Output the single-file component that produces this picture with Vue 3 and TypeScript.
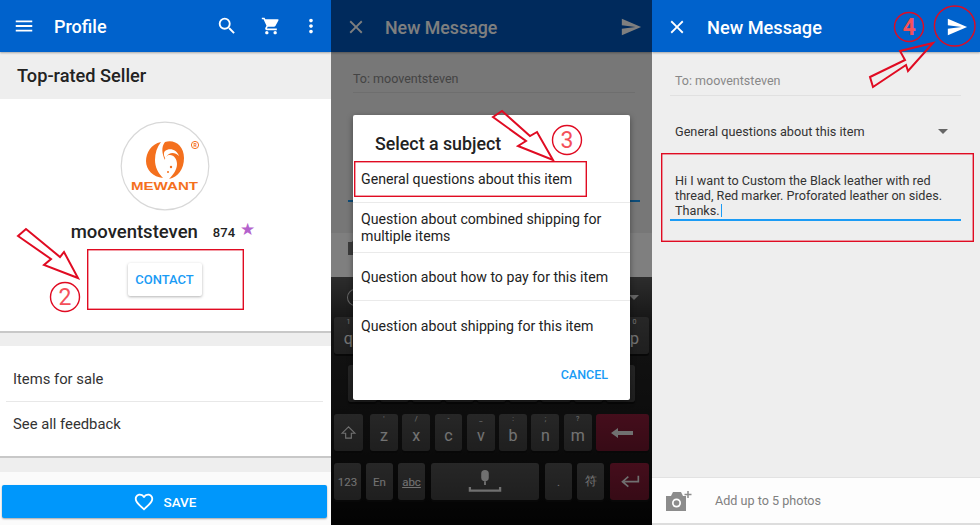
<template>
  <div class="page">
    <!-- 1: seller profile -->
    <section class="panel profile">
      <header class="bar">
        <svg class="ico" viewBox="0 0 24 24"><path d="M3 18h18v-2H3v2zm0-5h18v-2H3v2zm0-7v2h18V6H3z" /></svg>
        <span class="bar-title title-profile">Profile</span>
        <span class="spacer"></span>
        <svg class="ico search" viewBox="0 0 24 24"><path d="M15.5 14h-.79l-.28-.27A6.47 6.47 0 0 0 16 9.5 6.5 6.5 0 1 0 9.5 16c1.61 0 3.09-.59 4.23-1.57l.27.28v.79l5 4.99L20.49 19l-4.99-5zm-6 0C7.01 14 5 11.99 5 9.5S7.01 5 9.500 5 14 7.01 14 9.5 11.99 14 9.5 14z" /></svg>
        <svg class="ico cart" viewBox="0 0 24 24"><path d="M7 18c-1.1 0-1.99.9-1.99 2S5.9 22 7 22s2-.9 2-2-.9-2-2-2zM1 2v2h2l3.6 7.59-1.35 2.45c-.16.28-.25.61-.25.96 0 1.1.9 2 2 2h12v-2H7.42c-.14 0-.25-.11-.25-.25l.03-.12.9-1.63h7.45c.75 0 1.41-.41 1.75-1.03l3.58-6.49A1 1 0 0 0 20 4H5.21l-.94-2H1zm16 16c-1.1 0-1.99.9-1.99 2s.89 2 1.99 2 2-.9 2-2-.9-2-2-2z" /></svg>
        <svg class="ico more" viewBox="0 0 24 24"><path d="M12 8c1.1 0 2-.9 2-2s-.9-2-2-2-2 .9-2 2 .9 2 2 2zm0 2c-1.1 0-2 .9-2 2s.9 2 2 2 2-.9 2-2-.9-2-2-2zm0 6c-1.1 0-2 .9-2 2s.9 2 2 2 2-.9 2-2-.9-2-2-2z" /></svg>
      </header>
      <div class="band">Top-rated Seller</div>
      <div class="card">
        <svg class="avatar" viewBox="0 0 90 90">
          <circle cx="45" cy="45" r="43.8" fill="#fff" stroke="#d8d8d8" stroke-width="1.2" />
          <path d="M41 21C31 23 26 32 26 40c0 9 7 16 17 17-5-5-8-11-8-18 0-7 2-13 6-18z" fill="#f4701e" />
          <path d="M45 21c10-3 19 4 19 16 0 11-6 19-15 21 4-4 8-9 8-15 0-5-3-9-7-9-3 0-5 2-5 5-3-6-4-13 0-18z" fill="#f4701e" />
          <path d="M45 30c5-4 12-1 14 5-3-3-7-4-10-2-2 1-3 3-3 5-2-2-3-6-1-8z" fill="#fff" />
          <circle cx="51" cy="46" r="1.200" fill="#f4701e" />
          <circle cx="48" cy="51" r="1" fill="#f4701e" />
          <circle cx="75" cy="24" r="3.600" fill="none" stroke="#f4701e" stroke-width="1" />
          <text x="75" y="26" class="reg">R</text>
          <text x="11" y="69" class="brand" textLength="67" lengthAdjust="spacingAndGlyphs">MEWANT</text>
        </svg>
        <div class="seller">
          <span class="seller-name">mooventsteven</span>
          <span class="seller-score">874</span>
          <span class="seller-star">★</span>
        </div>
        <button class="contact">CONTACT</button>
      </div>
      <div class="links">
        <div class="link">Items for sale</div>
        <div class="link-sep"></div>
        <div class="link">See all feedback</div>
      </div>
      <div class="save-wrap">
        <button class="save">
          <svg class="heart" viewBox="0 0 24 24"><path d="M16.5 3c-1.74 0-3.41.81-4.5 2.09C10.91 3.81 9.24 3 7.5 3 4.42 3 2 5.42 2 8.5c0 3.78 3.4 6.86 8.55 11.54L12 21.35l1.45-1.32C18.6 15.36 22 12.28 22 8.5 22 5.42 19.58 3 16.5 3zm-4.4 15.55l-.1.1-.1-.1C7.14 14.24 4 11.39 4 8.5 4 6.5 5.5 5 7.5 5c1.54 0 3.04.99 3.57 2.36h1.87C13.46 5.99 14.96 5 16.5 5c2 0 3.5 1.5 3.5 3.5 0 2.89-3.14 5.74-7.9 10.05z" /></svg>
          SAVE
        </button>
      </div>
    </section>

    <!-- 2: subject dialog over the compose screen -->
    <section class="panel subject">
      <header class="bar msg-bar">
        <svg class="ico" viewBox="0 0 24 24"><path d="M19 6.41 17.59 5 12 10.59 6.41 5 5 6.41 10.59 12 5 17.59 6.41 19 12 13.41 17.59 19 19 17.59 13.41 12z" /></svg>
        <span class="bar-title title-msg">New Message</span>
        <span class="spacer"></span>
        <svg class="ico send" viewBox="0 0 24 24"><path d="M2.01 21 23 12 2.01 3 2 10l15 2-15 2z" /></svg>
      </header>
      <div class="compose-behind">
        <div class="to">To: mooventsteven</div>
        <div class="behind-line"></div>
        <div class="behind-blue"></div>
      </div>
      <div class="photos-behind">
        <svg class="cam-behind" viewBox="0 0 24 24"><path d="M3 7h4l2-3h6l2 3h4v13H3z" fill="#777" /></svg>
      </div>
      <div class="keyboard">
        <div class="kb-tools">
          <span class="panda"></span>
          <span class="spacer"></span>
          <span class="kb-caret"></span>
        </div>
        <div class="kb-row row-top">
          <!-- only q and p stick out from under the dialog -->
          <span v-for="k in topRow" :key="k.label" class="key stacked">
            <template v-if="k.label === 'q' || k.label === 'p'">
              <small>{{ k.hint }}</small>
              <b>{{ k.label }}</b>
            </template>
          </span>
        </div>
        <div class="kb-row row-mid">
          <span v-for="k in topRow.slice(0, 9)" :key="k.label" class="key blank"></span>
        </div>
        <div class="kb-row row-low">
          <span class="key shift">
            <svg viewBox="0 0 24 24"><path d="M12 4 3 13h5v7h8v-7h5z" fill="none" stroke="#e0e0e0" stroke-width="1.6" /></svg>
          </span>
          <span v-for="k in lowRow" :key="k.label" class="key stacked letter">
            <small>{{ k.hint }}</small>
            <b>{{ k.label }}</b>
          </span>
          <span class="key red back">
            <svg viewBox="0 0 24 12"><path d="M1 6 8 1v3h15v4H8v3z" fill="#e0e0e0" /></svg>
          </span>
        </div>
        <div class="kb-row row-bottom">
          <span class="key fn">123</span>
          <span class="key fn">En</span>
          <span class="key fn under">abc</span>
          <span class="key space">
            <svg viewBox="0 0 36 26"><rect x="14" y="1" width="8" height="12" rx="4" fill="#e0e0e0" /><path d="M18 13v4" stroke="#e0e0e0" stroke-width="2" /><path d="M2 19v4h32v-4" fill="none" stroke="#e0e0e0" stroke-width="2.4" /></svg>
          </span>
          <span class="key fn">.</span>
          <span class="key fn">符</span>
          <span class="key red enter">
            <svg viewBox="0 0 24 16"><path d="M22 1v7H5M10 2 3 8l7 6" fill="none" stroke="#e0e0e0" stroke-width="2" /></svg>
          </span>
        </div>
      </div>
      <div class="scrim"></div>
      <div class="dialog">
        <div class="dialog-title">Select a subject</div>
        <div class="option first">General questions about this item</div>
        <div class="option two">Question about combined shipping for multiple items</div>
        <div class="option third">Question about how to pay for this item</div>
        <div class="option last">Question about shipping for this item</div>
        <div class="cancel">CANCEL</div>
      </div>
    </section>

    <!-- 3: filled-in compose screen -->
    <section class="panel compose">
      <header class="bar msg-bar">
        <svg class="ico" viewBox="0 0 24 24"><path d="M19 6.41 17.59 5 12 10.59 6.41 5 5 6.41 10.59 12 5 17.59 6.41 19 12 13.41 17.59 19 19 17.59 13.41 12z" /></svg>
        <span class="bar-title title-msg">New Message</span>
        <span class="spacer"></span>
        <svg class="ico send" viewBox="0 0 24 24"><path d="M2.01 21 23 12 2.01 3 2 10l15 2-15 2z" /></svg>
      </header>
      <div class="form">
        <div class="to">To: mooventsteven</div>
        <div class="form-line"></div>
        <div class="subject-row">
          <span>General questions about this item</span>
          <span class="caret"></span>
        </div>
        <div class="message">Hi I want to Custom the Black leather with red thread, Red marker. Proforated leather on sides. Thanks.<i class="cursor"></i></div>
        <div class="message-line"></div>
      </div>
      <footer class="photos">
        <svg class="cam" viewBox="0 0 27 20"><path d="M1 5h5l2-4h8l2 4h3v15H1z" fill="#8c8c8c" /><circle cx="11.500" cy="12" r="4.500" fill="#fff" /><circle cx="11.500" cy="12" r="2.800" fill="#8c8c8c" /><path d="M23 0v7M19.500 3.500h7" stroke="#8c8c8c" stroke-width="1.500" /></svg>
        <span>Add up to 5 photos</span>
      </footer>
    </section>

    <!-- red annotations drawn over the screenshots -->
    <svg class="marks" viewBox="0 0 980 525">
      <polygon points="18,236 26,229 60,257 64,252 78,278 44,265 51,259" />
      <polygon points="493,117 502,111 530,136 537,132 553,160 518,146 526,141" />
      <polygon points="870,77 905,60 900,51 933,43 908,71 906,65 873,87" />
      <ellipse cx="954.700" cy="26" rx="20.300" ry="20" />
      <rect x="87.700" y="249.700" width="155.600" height="59.600" />
      <rect x="354.700" y="161.700" width="231.600" height="34.600" />
      <rect x="661.700" y="153.700" width="311.600" height="87.600" />
      <circle cx="65" cy="297" r="14.500" />
      <circle cx="567" cy="140" r="14.500" />
      <circle cx="909" cy="27" r="14.500" />
    </svg>
    <span class="num num-2">2</span>
    <span class="num num-3">3</span>
    <span class="num num-4">4</span>
  </div>
</template>

<script setup lang="ts">
interface Key {
  label: string;
  hint: string;
}

const topRow: Key[] = [
  { label: 'q', hint: '1' },
  { label: 'w', hint: '2' },
  { label: 'e', hint: '3' },
  { label: 'r', hint: '4' },
  { label: 't', hint: '5' },
  { label: 'y', hint: '6' },
  { label: 'u', hint: '7' },
  { label: 'i', hint: '8' },
  { label: 'o', hint: '9' },
  { label: 'p', hint: '0' },
];

const lowRow: Key[] = [
  { label: 'z', hint: '\'' },
  { label: 'x', hint: '/' },
  { label: 'c', hint: '-' },
  { label: 'v', hint: '_' },
  { label: 'b', hint: ':' },
  { label: 'n', hint: ';' },
  { label: 'm', hint: '?' },
];
</script>

<style>
html,
body {
  margin: 0;
  background: #fff;
}
</style>

<style scoped>
.page {
  position: relative;
  display: grid;
  grid-template-columns: 331px 321px 328px;
  width: 980px;
  height: 525px;
  overflow: hidden;
  font-family: Roboto, "Liberation Sans", sans-serif;
}

.panel {
  position: relative;
  display: flex;
  flex-direction: column;
  height: 525px;
  overflow: hidden;
}

.bar {
  display: flex;
  align-items: center;
  flex: none;
  height: 52px;
  padding: 0 16px 0 13px;
  box-sizing: border-box;
  background: #0062cc;
  box-shadow: 0 1px 2px rgba(0, 0, 0, 0.3);
  color: #fff;
  z-index: 1;
}

.msg-bar {
  padding: 2px 10px 0 14px;
}

.ico {
  flex: none;
  width: 22px;
  height: 22px;
  fill: #fff;
}

.spacer {
  flex: 1;
}

.bar-title {
  font-size: 18px;
  font-weight: 500;
}

.title-profile {
  margin-left: 19px;
}

.title-msg {
  margin-left: 18px;
  font-size: 17.800px;
}

.search {
  margin-right: 23px;
}

.cart {
  width: 20px;
  margin-right: 19px;
}

.more {
  margin-right: -7px;
}

/* first panel */
.profile {
  background: #eee;
}

.band {
  flex: none;
  height: 47px;
  padding-left: 17px;
  line-height: 47px;
  color: #222;
  font-size: 18.200px;
  font-weight: 500;
}

.card {
  display: flex;
  flex-direction: column;
  align-items: center;
  flex: none;
  height: 234px;
  padding: 22px 2px 0 0;
  box-sizing: border-box;
  border-bottom: 2px solid #c8c8c8;
  background: #fff;
}

.avatar {
  width: 90px;
  height: 90px;
}

.reg {
  font-size: 5px;
  font-weight: 700;
  fill: #f4701e;
  text-anchor: middle;
}

.brand {
  font-family: "Liberation Sans", sans-serif;
  font-size: 10.500px;
  font-weight: 700;
  fill: #f4701e;
}

.seller {
  display: flex;
  align-items: center;
  height: 28px;
  margin: 7px 3px 0 0;
  color: #222;
}

.seller-name {
  font-size: 18.500px;
  font-weight: 500;
}

.seller-score {
  margin-left: 15px;
  font-size: 13px;
  font-weight: 500;
}

.seller-star {
  margin: -6px 0 0 5px;
  color: #b462cc;
  font-size: 17px;
  font-family: "DejaVu Sans", sans-serif;
}

.contact {
  width: 74px;
  height: 33px;
  margin-top: 17px;
  border: 0;
  border-radius: 2px;
  background: #fff;
  box-shadow: 0 1px 3px rgba(0, 0, 0, 0.3);
  color: #1a9bf5;
  font: 500 13px Roboto, sans-serif;
}

.links {
  flex: none;
  height: 112px;
  margin-top: 13px;
  box-sizing: border-box;
  border-bottom: 2px solid #c8c8c8;
  background: #fff;
}

.link {
  height: 54.500px;
  padding-left: 13px;
  line-height: 66px;
  color: #333;
  font-size: 14.800px;
}

.link + .link-sep + .link {
  line-height: 44px;
}

.link-sep {
  height: 1px;
  margin: 0 8px 0 6px;
  background: #e8e8e8;
}

.save-wrap {
  flex: 1;
  margin-top: 14px;
  padding: 13px 4px 0 2px;
  background: #fbfbfb;
}

.save {
  display: flex;
  align-items: center;
  justify-content: center;
  gap: 9px;
  width: 100%;
  height: 33px;
  border: 0;
  border-radius: 2px;
  background: #0097fb;
  box-shadow: 0 1px 2px rgba(0, 0, 0, 0.35);
  color: #fff;
  font: 500 13.500px Roboto, sans-serif;
}

.heart {
  width: 22px;
  height: 22px;
  fill: #fff;
}

/* second panel */
.subject {
  background: #eee;
}

.subject .bar {
  background: #0055b8;
}

.to {
  color: #888;
  font-size: 12.500px;
}

.compose-behind {
  flex: 1;
  padding: 19px 17px 0 22px;
}

.behind-line {
  height: 1px;
  margin-top: 6px;
  background: #ddd;
}

.behind-blue {
  height: 1.500px;
  margin: 107px -5px 0;
  background: #1a9bf5;
}

.photos-behind {
  flex: none;
  height: 44px;
  background: #fff;
}

.cam-behind {
  width: 24px;
  height: 24px;
  margin: 2px 0 0 14px;
}

.keyboard {
  display: flex;
  flex-direction: column;
  flex: none;
  height: 248px;
  background: linear-gradient(#5a5a5a, #262626 20%, #161616 70%, #060606);
}

.kb-tools {
  display: flex;
  align-items: center;
  height: 40px;
  padding: 0 13px 0 16px;
  box-sizing: border-box;
}

.panda {
  width: 14px;
  height: 15px;
  border: 1.500px solid #ccc;
  border-radius: 50%;
}

.kb-caret {
  border-left: 5px solid transparent;
  border-right: 5px solid transparent;
  border-top: 5px solid #ccc;
}

.kb-row {
  display: flex;
  flex: none;
  gap: 3px;
  padding: 0 3px;
}

.key {
  display: flex;
  align-items: center;
  justify-content: center;
  height: 37px;
  box-sizing: border-box;
  border-radius: 3px;
  background: linear-gradient(#4e4e4e, #3e3e3e);
  box-shadow: 0 2px 0 #111;
  color: #e6e6e6;
}

.stacked {
  flex-direction: column;
  justify-content: flex-start;
}

.stacked small {
  height: 9px;
  margin-top: 1px;
  font-size: 7px;
  line-height: 9px;
}

.stacked b {
  height: 18px;
  margin-top: 3px;
  font-size: 16px;
  font-weight: 400;
  line-height: 18px;
}

.row-top .key {
  flex: 1;
}

.row-mid {
  margin-top: 11px;
  padding: 0 17px;
}

.row-mid .key {
  flex: 1;
}

.row-low {
  margin-top: 12px;
}

.row-low .letter {
  flex: none;
  width: 27.800px;
  margin-left: 1.500px;
}

.shift {
  width: 29px;
  margin-right: 2.500px;
}

.shift svg {
  width: 17px;
}

.red {
  background: linear-gradient(#8a1c38, #6e162c);
}

.back {
  flex: 1;
  margin-left: 1px;
}

.back svg {
  width: 24px;
}

.row-bottom {
  margin-top: 12px;
  gap: 5px;
}

.fn {
  width: 27px;
  font-size: 11.500px;
}

.under {
  text-decoration: underline;
}

.space {
  width: 108px;
  margin: 0 1px;
}

.space svg {
  width: 34px;
}

.enter {
  flex: 1;
  margin-left: 1px;
}

.enter svg {
  width: 20px;
}

.scrim {
  position: absolute;
  inset: 0;
  background: rgba(0, 0, 0, 0.5);
  z-index: 2;
}

.dialog {
  position: absolute;
  top: 115px;
  left: 22px;
  width: 277px;
  height: 285px;
  border-radius: 2px;
  background: #fff;
  box-shadow: 0 2px 6px rgba(0, 0, 0, 0.4);
  color: #222;
  z-index: 3;
}

.dialog-title {
  height: 47px;
  padding-left: 22px;
  line-height: 58px;
  font-size: 17.800px;
  font-weight: 500;
}

.option {
  padding: 0 8px;
  box-sizing: border-box;
  border-bottom: 1.500px solid #eaeaea;
  font-size: 14.150px;
  line-height: 17px;
}

.first {
  height: 41px;
  padding-top: 9px;
}

.two {
  height: 50px;
  padding-top: 8px;
}

.third {
  height: 48px;
  padding-top: 16px;
}

.last {
  height: 48px;
  padding-top: 17px;
  border: 0;
}

.cancel {
  margin: 18px 22px 0 0;
  text-align: right;
  color: #1a9bf5;
  font-size: 12.500px;
  font-weight: 500;
}

/* third panel */
.compose {
  background: #eee;
}

.compose .msg-bar {
  padding: 2px 12px 0 14px;
}

.compose .title-msg {
  margin-left: 19px;
  font-size: 18.200px;
}

.form {
  flex: 1;
  padding: 21px 19px 0 18px;
}

.form .to {
  padding-left: 5px;
}

.form-line {
  height: 1px;
  margin-top: 7px;
  background: #e0e0e0;
}

.subject-row {
  display: flex;
  align-items: center;
  justify-content: space-between;
  height: 20px;
  margin-top: 25px;
  padding: 0 13px 0 5px;
  color: #333;
  font-size: 12.700px;
}

.caret {
  border-left: 5px solid transparent;
  border-right: 5px solid transparent;
  border-top: 5px solid #666;
}

.message {
  margin-top: 32px;
  padding: 0 6px 0 5px;
  color: #333;
  font-size: 12.650px;
  line-height: 15px;
}

.cursor {
  display: inline-block;
  width: 1.500px;
  height: 13px;
  margin: 0 0 -2px 1px;
  background: #1a9bf5;
}

.message-line {
  height: 2px;
  margin-top: 1px;
  background: #1a9bf5;
}

.photos {
  display: flex;
  align-items: center;
  flex: none;
  height: 45px;
  margin-bottom: 2px;
  padding-left: 13px;
  border-top: 1px solid #e2e2e2;
  box-shadow: 0 2px 0 #ddd;
  background: #fdfdfd;
  color: #808080;
  font-size: 12.600px;
}

.cam {
  width: 27px;
  height: 20px;
  margin-right: 23px;
}

/* annotations */
.marks {
  position: absolute;
  inset: 0;
  width: 980px;
  height: 525px;
  z-index: 5;
  pointer-events: none;
  fill: none;
  stroke: #e00b22;
  stroke-width: 1.400;
}

.marks polygon {
  stroke-width: 2;
}

.num {
  position: absolute;
  display: flex;
  align-items: center;
  justify-content: center;
  width: 30px;
  height: 30px;
  color: #f4505a;
  font-size: 23px;
  z-index: 5;
}

.num-2 {
  left: 50px;
  top: 282px;
}

.num-3 {
  left: 552px;
  top: 125px;
}

.num-4 {
  left: 894px;
  top: 12px;
  font-weight: 700;
}
</style>
